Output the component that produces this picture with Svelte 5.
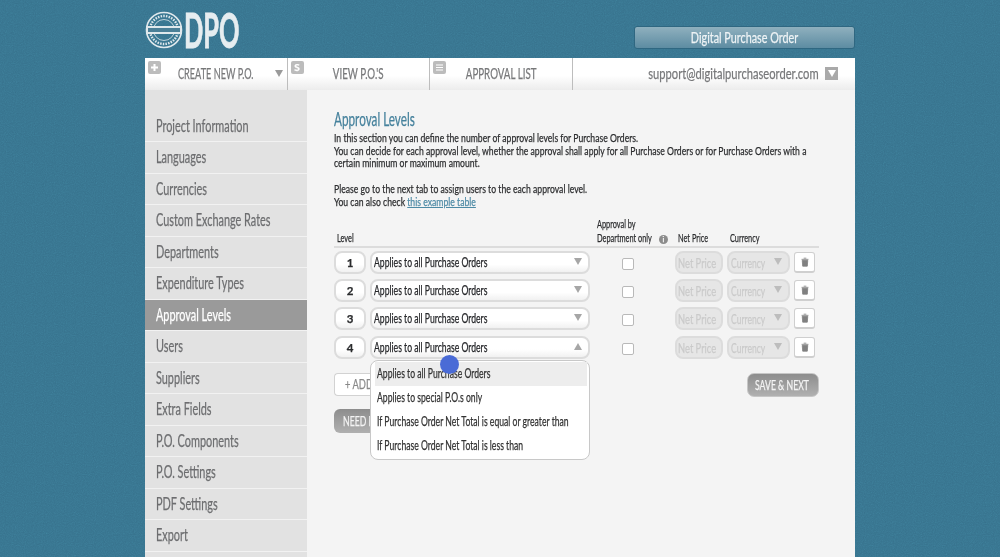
<script>
	const sections = [
		'Project Information', 'Languages', 'Currencies', 'Custom Exchange Rates', 'Departments',
		'Expenditure Types', 'Approval Levels', 'Users', 'Suppliers', 'Extra Fields',
		'P.O. Components', 'P.O. Settings', 'PDF Settings', 'Export'
	];
	const levels = [1, 2, 3, 4];
	const options = [
		'Applies to all Purchase Orders',
		'Applies to special P.O.s only',
		'If Purchase Order Net Total is equal or greater than',
		'If Purchase Order Net Total is less than'
	];
</script>

<svg class="grain" width="1000" height="557" aria-hidden="true">
	<filter id="noise">
		<feTurbulence type="fractalNoise" baseFrequency="0.9" numOctaves="2" />
		<feColorMatrix type="saturate" values="0" />
	</filter>
	<rect width="1000" height="557" filter="url(#noise)" />
</svg>

<div class="page">
	<header class="top">
		<div class="logo">
			<svg width="38" height="38" viewBox="0 0 38 38" aria-hidden="true">
				<circle cx="19" cy="19" r="17.5" fill="none" stroke="#dfe8ec" stroke-width="1.6" />
				<circle cx="19" cy="19" r="14" fill="none" stroke="#dfe8ec" stroke-width="2.4" stroke-dasharray="1.5 1.2" />
				<circle cx="19" cy="19" r="10.5" fill="none" stroke="#dfe8ec" stroke-width="0.8" />
				<rect x="1" y="15" width="36" height="8" fill="#dfe8ec" />
				<rect x="3" y="17" width="32" height="4" fill="#4a7f97" />
			</svg>
			<span class="sq">DPO</span>
		</div>
		<div class="title-pill"><span class="sq mid">Digital Purchase Order</span></div>
	</header>

	<nav class="tabs">
		<div class="tab">
			<span class="tab-icon">
				<svg width="13" height="13" viewBox="0 0 13 13"><path d="M6.5 3v7M3 6.500h7" stroke="#fff" stroke-width="2" /></svg>
			</span>
			<span class="tab-label first"><span class="sq">CREATE NEW P.O.</span></span>
			<span class="caret"></span>
		</div>
		<div class="tab">
			<span class="tab-icon"><b>S</b></span>
			<span class="tab-label"><span class="sq mid">VIEW P.O.'S</span></span>
		</div>
		<div class="tab">
			<span class="tab-icon">
				<svg width="13" height="13" viewBox="0 0 13 13"><path d="M3 4h7M3 6.500h7M3 9h7" stroke="#fff" stroke-width="1.200" /></svg>
			</span>
			<span class="tab-label"><span class="sq mid">APPROVAL LIST</span></span>
		</div>
		<div class="account">
			<span class="sq end">support@digitalpurchaseorder.com</span>
			<span class="account-btn"><i></i></span>
		</div>
	</nav>

	<div class="body">
		<aside class="side">
			{#each sections as s}
				<div class="side-item" class:active={s === 'Approval Levels'}><span class="sq">{s}</span></div>
			{/each}
		</aside>

		<main class="content">
			<h1><span class="sq">Approval Levels</span></h1>
			<div class="copy">
				In this section you can define the number of approval levels for Purchase Orders.<br />
				You can decide for each approval level, whether the approval shall apply for all Purchase Orders or for Purchase Orders with a<br />
				certain minimum or maximum amount.<br />
				<br />
				Please go to the next tab to assign users to the each approval level.<br />
				You can also check <a href="#top">this example table</a>
			</div>

			<div class="grid head">
				<div class="hcell"><span class="sq">Level</span></div>
				<div></div>
				<div class="hcell dept">
					<span class="sq">Approval by</span><br />
					<span class="sq">Department only</span><i class="info">i</i>
				</div>
				<div class="hcell"><span class="sq">Net Price</span></div>
				<div class="hcell"><span class="sq">Currency</span></div>
				<div></div>
			</div>

			{#each levels as n}
				<div class="grid row">
					<div class="field num">{n}</div>
					<div class="field select">
						<span class="sq">Applies to all Purchase Orders</span>
						<i class="tri" class:up={n === 4}></i>
					</div>
					<div class="check"><span></span></div>
					<div class="field off net"><span class="sq">Net Price</span></div>
					<div class="field off cur"><span class="sq">Currency</span> <i class="tri"></i></div>
					<div class="trash">
						<svg width="8" height="10" viewBox="0 0 9 11" aria-hidden="true">
							<path d="M3 1.200h3M.6 2.500h7.800M1.400 3.600h6.200l-.5 6.600H1.900z" fill="#808080" stroke="#808080" stroke-width="0.9" />
						</svg>
					</div>
				</div>
			{/each}

			<div class="actions">
				<div class="left">
					<div class="btn-add"><span class="sq">+ ADD</span></div>
					<div class="btn-help"><span class="sq">NEED H</span></div>
				</div>
				<div class="btn-save"><span class="sq">SAVE &amp; NEXT</span></div>
			</div>

			<div class="menu">
				{#each options as o, i}
					<div class="menu-item" class:hover={i === 0}><span class="sq">{o}</span></div>
				{/each}
			</div>
			<div class="touch"></div>
		</main>
	</div>
</div>

<style>
	:global(body) {
		background: #37728d;
		overflow: hidden;
	}

	.grain {
		position: fixed;
		left: 0;
		top: 0;
		opacity: 0.22;
		mix-blend-mode: overlay;
	}

	.page {
		position: relative;
		box-sizing: border-box;
		width: 710px;
		height: 557px;
		margin-left: 145px;
		overflow: hidden;
		font-family: Lato, "Liberation Sans", sans-serif;
		-webkit-text-stroke: 0.25px;
		filter: blur(0.3px);
	}

	/* no condensed face installed, so squeeze the text sideways */
	.sq {
		display: inline-block;
		white-space: nowrap;
		transform: scaleX(0.72);
		transform-origin: left center;
	}

	.sq.mid {
		transform-origin: center;
	}

	.sq.end {
		transform-origin: right center;
	}

	.top {
		display: flex;
		justify-content: space-between;
		align-items: flex-start;
		height: 58px;
	}

	.logo {
		display: flex;
		align-items: center;
		height: 59px;
		color: #e6edf0;
		font-size: 47px;
		font-weight: 700;
		-webkit-text-stroke: 0.8px;
	}

	.logo .sq {
		margin-left: 1px;
		transform: scaleX(0.54);
	}

	.title-pill {
		box-sizing: border-box;
		width: 221px;
		height: 23px;
		margin-top: 26px;
		border: 1px solid #2f6781;
		border-radius: 3px;
		background: linear-gradient(#8fb0be, #5d8ca2);
		color: #eef3f5;
		font-size: 15px;
		line-height: 21px;
		text-align: center;
	}

	.tabs {
		display: flex;
		height: 32px;
		background: linear-gradient(#fff 55%, #ececec);
		color: #77787a;
		font-size: 15.500px;
	}

	.tab {
		position: relative;
		display: flex;
		box-sizing: border-box;
		width: 142.500px;
		padding-top: 7px;
		border-right: 1px solid #bdbdbd;
		line-height: 17px;
	}

	.tab .sq {
		transform: scaleX(0.63);
	}

	.tab .first .sq {
		transform: scaleX(0.59);
	}

	.tab-label {
		flex: 1;
		text-align: center;
	}

	.tab-label.first {
		flex: none;
		margin-left: 33px;
	}

	.tab-icon {
		position: absolute;
		left: 3px;
		top: 3px;
		display: block;
		width: 13px;
		height: 13px;
		border-radius: 2px;
		background: #bcbcbc;
		color: #fff;
		font-size: 10px;
		line-height: 13px;
		text-align: center;
	}

	.tab-icon svg {
		display: block;
	}

	.caret {
		position: absolute;
		right: 4px;
		top: 12px;
		border-left: 4.500px solid transparent;
		border-right: 4.500px solid transparent;
		border-top: 7px solid #9a9a9a;
	}

	.account {
		display: flex;
		flex: 1;
		justify-content: flex-end;
		gap: 6px;
		padding: 7px 17px 0 0;
		font-size: 15.500px;
		line-height: 17px;
	}

	.account-btn {
		display: flex;
		align-items: center;
		justify-content: center;
		flex: none;
		width: 13px;
		height: 13px;
		margin-top: 2px;
		background: #a9a9a9;
	}

	.account-btn i {
		border-left: 4.500px solid transparent;
		border-right: 4.500px solid transparent;
		border-top: 7px solid #fff;
	}

	.body {
		display: flex;
		height: 467px;
		background: #f4f4f4;
	}

	.side {
		flex: none;
		width: 162px;
		padding-top: 20.500px;
		background: #e2e2e2;
	}

	.side-item {
		box-sizing: border-box;
		height: 31.500px;
		padding-left: 11px;
		border-bottom: 1.500px solid #f2f2f2;
		color: #6d6e70;
		font-size: 16.500px;
		line-height: 30px;
	}

	.side-item .sq {
		transform: scaleX(0.66);
	}

	.side-item.active {
		background: #9a9a9a;
		color: #fff;
	}

	.content {
		position: relative;
		flex: 1;
		min-width: 0;
		padding: 19px 36px 0 27px;
		color: #2b2c2e;
		font-size: 12px;
		line-height: 12.700px;
	}

	h1 {
		margin: 0 0 2px;
		color: #45819c;
		font-size: 18.500px;
		font-weight: 400;
		line-height: 21px;
	}

	h1 .sq {
		transform: scaleX(0.635);
	}

	.copy {
		width: 660px;
		white-space: nowrap;
		transform: scaleX(0.72);
		transform-origin: left;
	}

	a {
		color: #4d8aa5;
	}

	.grid {
		display: grid;
		grid-template-columns: 32px 220px 77px 48px 63px 21px;
		column-gap: 4px;
	}

	.head {
		align-items: end;
		margin-top: 9px;
		padding-bottom: 1px;
		border-bottom: 2px solid #dcdcdc;
		font-size: 11.500px;
		line-height: 14px;
	}

	.hcell {
		padding-left: 3px;
		white-space: nowrap;
	}

	.hcell .sq {
		transform: scaleX(0.64);
	}

	.info {
		position: relative;
		left: -24px;
		display: inline-block;
		width: 9px;
		height: 9px;
		border-radius: 50%;
		background: #8c8c8c;
		color: #fff;
		font-size: 7px;
		font-style: normal;
		line-height: 9px;
		text-align: center;
	}

	.row {
		align-items: center;
		height: 28.300px;
	}

	.field {
		position: relative;
		box-sizing: border-box;
		height: 23px;
		border: 2px solid #dcdcdc;
		border-radius: 8px;
		background: linear-gradient(#fff 60%, #f1f1f1);
		white-space: nowrap;
		line-height: 19px;
	}

	.num {
		font-weight: 700;
		font-size: 11.500px;
		text-align: center;
	}

	.select {
		padding-left: 2px;
		color: #26272a;
		font-size: 12.500px;
	}

	.select .sq {
		transform: scaleX(0.69);
	}

	.select .tri {
		position: absolute;
		right: 6px;
		top: 5px;
	}

	.tri {
		width: 0;
		height: 0;
		border-left: 4.500px solid transparent;
		border-right: 4.500px solid transparent;
		border-top: 7px solid #a6a6a6;
	}

	.tri.up {
		border-top: 0;
		border-bottom: 7px solid #a6a6a6;
	}

	.check {
		display: flex;
		justify-content: center;
		margin-top: 3px;
		padding-right: 9px;
	}

	.check span {
		box-sizing: border-box;
		width: 12px;
		height: 12px;
		border: 1px solid #b9b9b9;
		border-radius: 2px;
		background: #fff;
	}

	.off {
		overflow: hidden;
		background: #e6e6e6;
		color: #cacaca;
		font-size: 14px;
	}

	.net {
		padding-left: 1px;
	}

	.net .sq {
		transform: scaleX(0.667);
	}

	.cur {
		padding-left: 2px;
	}

	.cur .sq {
		transform: scaleX(0.61);
	}

	.cur .tri {
		position: absolute;
		right: 6px;
		top: 5px;
		border-top-color: #bdbdbd;
	}

	.trash {
		display: flex;
		align-items: center;
		justify-content: center;
		box-sizing: border-box;
		height: 21px;
		border: 1px solid #cfcfcf;
		border-bottom-width: 2px;
		border-radius: 3px;
		background: #fff;
	}

	.actions {
		display: flex;
		justify-content: space-between;
		align-items: flex-start;
		margin-top: 12px;
	}

	.left {
		display: flex;
		flex-direction: column;
		gap: 13px;
		align-items: flex-start;
	}

	.btn-add {
		box-sizing: border-box;
		width: 36px;
		height: 23px;
		padding-left: 10px;
		border: 1px solid #d2d2d2;
		border-right: 0;
		border-radius: 4px 0 0 4px;
		background: #fff;
		color: #888;
		font-size: 13px;
		line-height: 21px;
	}

	.btn-help {
		box-sizing: border-box;
		width: 36px;
		height: 24px;
		padding-left: 9px;
		border-radius: 6px 0 0 6px;
		background: linear-gradient(#8d8d8d, #b0b0b0);
		color: #f4f4f4;
		font-size: 14px;
		line-height: 24px;
	}

	.btn-help .sq {
		transform: scaleX(0.62);
	}

	.btn-save {
		box-sizing: border-box;
		width: 72px;
		height: 24px;
		padding-left: 7px;
		border: 1px solid #c6c6c6;
		border-radius: 7px;
		background: linear-gradient(#8d8d8d, #b0b0b0);
		color: #f4f4f4;
		font-size: 14px;
		line-height: 22px;
		white-space: nowrap;
	}

	.btn-save .sq {
		transform: scaleX(0.62);
	}

	.menu {
		position: absolute;
		left: 63px;
		top: 270px;
		box-sizing: border-box;
		width: 220px;
		height: 100px;
		padding: 1px 2px 0 4px;
		border: 1px solid #c8c8c8;
		border-radius: 8px;
		background: #fff;
		color: #333;
		font-size: 12.500px;
	}

	.menu-item {
		height: 24px;
		padding-left: 2px;
		line-height: 24px;
	}

	.menu-item .sq {
		transform: scaleX(0.69);
	}

	.menu-item.hover {
		background: #ededed;
	}

	.touch {
		position: absolute;
		left: 132.500px;
		top: 264.500px;
		width: 19px;
		height: 19px;
		border-radius: 50%;
		background: #4a6bd6;
	}
</style>
